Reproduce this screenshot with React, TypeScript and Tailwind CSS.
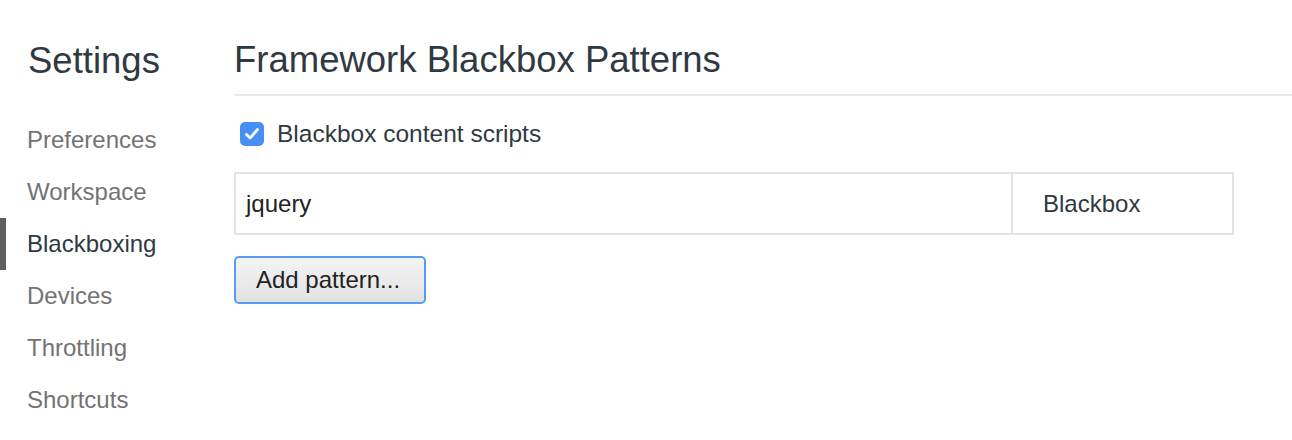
import React from 'react';

const navItems = ['Preferences', 'Workspace', 'Blackboxing', 'Devices', 'Throttling', 'Shortcuts'];

const NavItem = ({ label, active }: { label: string; active: boolean }) => (
  <div className="relative flex h-[52px] items-center pl-[27px]">
    {active && <span className="absolute left-0 top-0 h-[52px] w-[6px] bg-[#5f5f5f]" />}
    <span className={active ? 'text-[#303942]' : 'text-[#737373]'}>{label}</span>
  </div>
);

export default function App() {
  return (
    <div className="flex h-[440px] w-[1292px] overflow-hidden bg-white font-['Liberation_Sans',Arial,sans-serif] text-[24px] text-[#303942]">
      {/* Sidebar */}
      <aside className="w-[234px] shrink-0">
        <h1 className="pl-[28px] pt-[40px] text-[36.5px] leading-[42px]">Settings</h1>
        <nav className="mt-[32px]">
          {navItems.map((item) => (
            <NavItem key={item} label={item} active={item === 'Blackboxing'} />
          ))}
        </nav>
      </aside>

      {/* Content */}
      <main className="flex-1">
        <header className="border-b-2 border-[#eaeaea] pb-[13px] pt-[39px]">
          <h2 className="text-[36.5px] leading-[42px]">Framework Blackbox Patterns</h2>
        </header>

        <label className="ml-[6px] mt-[26px] flex h-[24px] items-center gap-[13px] text-[24.5px]">
          <span className="flex h-[24px] w-[24px] items-center justify-center rounded-[5px] bg-[#4690f4]">
            <svg width="18" height="18" viewBox="0 0 18 18" fill="none">
              <path d="M3.5 9.5l3.6 3.6L14.5 4.5" stroke="white" strokeWidth="2.8" strokeLinecap="round" strokeLinejoin="round" />
            </svg>
          </span>
          <span>Blackbox content scripts</span>
        </label>

        <div className="mt-[26px] flex h-[63px] w-[1000px] border-2 border-[#e4e4e4]">
          <div className="flex flex-1 items-center pl-[10px] text-[#222]">jquery</div>
          <div className="flex w-[221px] items-center border-l-2 border-[#e4e4e4] pl-[30px]">Blackbox</div>
        </div>

        <button className="mt-[21px] h-[48px] w-[192px] rounded-[5px] border-2 border-[#5b9af5] bg-gradient-to-b from-[#f4f4f4] to-[#e2e2e2] pl-[20px] text-left text-[#222]">
          Add pattern...
        </button>
      </main>
    </div>
  );
}
